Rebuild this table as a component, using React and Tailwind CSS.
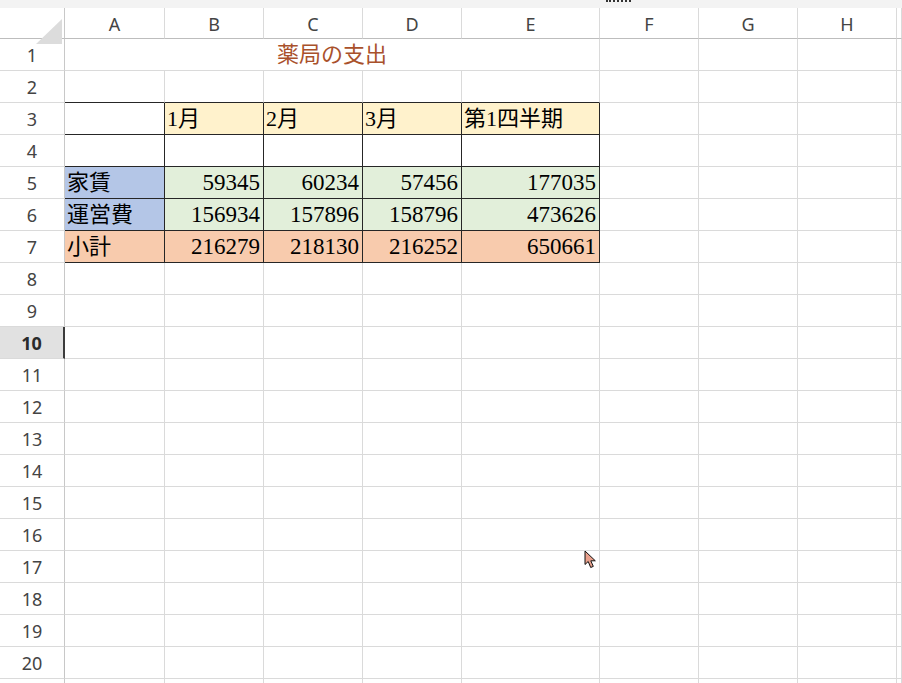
import React from "react";

const COLS = ["A", "B", "C", "D", "E", "F", "G", "H", ""];
const GRID = "grid grid-cols-[65px_100px_99px_99px_99px_138px_99px_99px_99px_1fr]";
const CELLFONT = "font-['Liberation_Serif','Noto_Sans_CJK_JP',serif] leading-none text-black";

const data = {
  3: ["", "1月", "2月", "3月", "第1四半期"],
  4: ["", "", "", "", ""],
  5: ["家賃", "59345", "60234", "57456", "177035"],
  6: ["運営費", "156934", "157896", "158796", "473626"],
  7: ["小計", "216279", "218130", "216252", "650661"],
};

function bgFor(r, c) {
  if (r === 3) return c === 0 ? "bg-white" : "bg-[#fff2cc]";
  if (r === 5 || r === 6) return c === 0 ? "bg-[#b4c6e7]" : "bg-[#e2efda]";
  if (r === 7) return "bg-[#f8cbad]";
  return "bg-white";
}

function RowHeader({ n }) {
  if (n === 10) {
    return (
      <div className="flex items-center justify-center border-r-2 border-b border-r-[#3c3c3c] border-b-[#dadada] bg-[#e1e1e1] pt-[2px] font-['Noto_Sans',sans-serif] text-[18px] font-bold text-[#2b2b2b]">
        {n}
      </div>
    );
  }
  return (
    <div className="flex items-center justify-center border-r border-b border-r-[#c8c8c8] border-b-[#dadada] bg-white pt-[2px] font-['Noto_Sans',sans-serif] text-[18px] text-[#444444]">
      {n > 20 ? "" : n}
    </div>
  );
}

function Row({ r }) {
  const cells = [];
  if (r === 1) {
    cells.push(
      <div key="t" className="col-span-5 flex items-center justify-center border-r border-b border-[#dadada] font-['Liberation_Serif','Noto_Sans_CJK_JP',serif] text-[22px] leading-none text-[#a9512b]">
        薬局の支出
      </div>
    );
    for (let c = 5; c < 9; c++) {
      cells.push(<div key={c} className="border-r border-b border-[#dadada]" />);
    }
  } else if (data[r]) {
    for (let c = 0; c < 5; c++) {
      const v = data[r][c];
      const isNum = /^\d+$/.test(v);
      cells.push(
        <div
          key={c}
          className={`flex items-center border-r border-b border-[#262626] ${bgFor(r, c)} ${CELLFONT} ${isNum ? "justify-end pr-[3px] text-[23px]" : "justify-start pl-[2px] text-[22px]"}`}
        >
          {v}
        </div>
      );
    }
    for (let c = 5; c < 9; c++) {
      cells.push(<div key={c} className="border-r border-b border-[#dadada]" />);
    }
  } else {
    for (let c = 0; c < 9; c++) {
      const black = r === 2 && c < 5;
      cells.push(
        <div
          key={c}
          className={black ? "border-r border-b border-r-[#dadada] border-b-[#262626]" : "border-r border-b border-[#dadada]"}
        />
      );
    }
  }
  return (
    <div className={`${GRID} h-[32px]`}>
      <RowHeader n={r} />
      {cells}
    </div>
  );
}

export default function App() {
  const rows = [];
  for (let r = 1; r <= 21; r++) rows.push(<Row key={r} r={r} />);
  return (
    <div className="relative h-[683px] w-[902px] overflow-hidden bg-white">
      <div className="relative h-[8px] bg-[#f3f3f3]">
        <div className="absolute left-[606px] top-0 h-[2px] w-[25px] border-t-2 border-dotted border-[#333333]" />
      </div>
      <div className={`${GRID} h-[31px]`}>
        <div className="relative border-r border-b border-r-[#c8c8c8] border-b-[#bdbdbd] bg-white">
          <svg className="absolute left-[36px] top-[11px]" width="26" height="25" viewBox="0 0 26 25">
            <polygon points="26,0 26,25 0,25" fill="#dcdcdc" />
          </svg>
        </div>
        {COLS.map((c, i) => (
          <div
            key={i}
            className="flex items-center justify-center border-r border-b border-r-[#dadada] border-b-[#bdbdbd] bg-white pt-[2px] font-['Noto_Sans',sans-serif] text-[18px] text-[#444444]"
          >
            {c}
          </div>
        ))}
      </div>
      {rows}
      <svg className="absolute left-[584px] top-[550px]" width="14" height="20" viewBox="0 0 14 20">
        <path d="M1 1 L1 14.5 L4.2 11.5 L6.7 17.5 L9.3 16.4 L6.8 10.8 L11.3 10.8 Z" fill="#e9a08c" stroke="#111111" strokeWidth="1" strokeLinejoin="round" />
      </svg>
    </div>
  );
}
